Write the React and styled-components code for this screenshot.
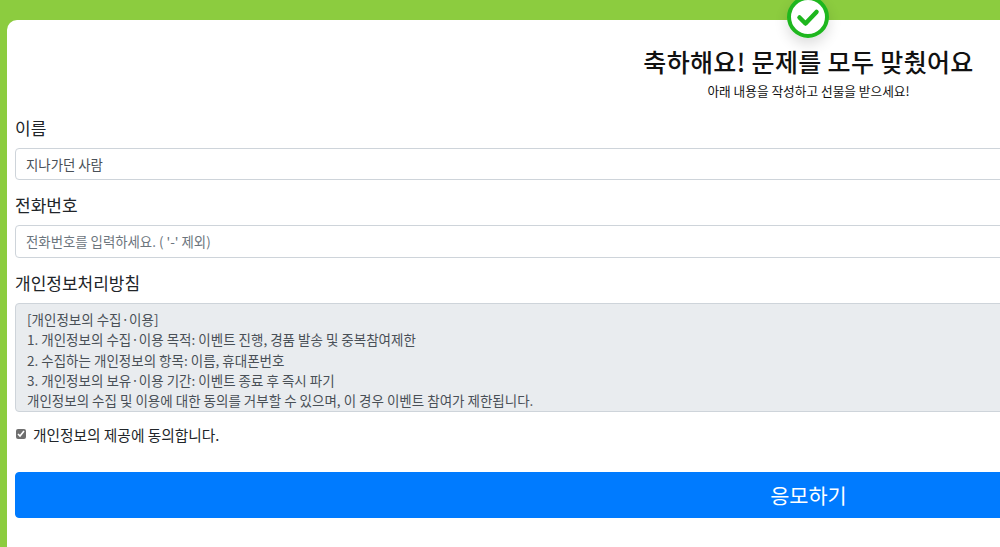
import React from 'react'
import styled, { createGlobalStyle } from 'styled-components'

const GlobalStyle = createGlobalStyle`
  html, body {
    margin: 0;
    padding: 0;
    height: 547px;
    overflow: hidden;
    background: #8ccc3f;
  }
  body, input, textarea, button {
    font-family: "Noto Sans CJK KR", "Noto Sans", sans-serif;
  }
`

const Page = styled.div`
  width: 1602px;
  height: 547px;
  padding: 20px 0 0 7px;
  box-sizing: border-box;
  background: #8ccc3f;
`

const Card = styled.div`
  position: relative;
  height: 527px;
  padding: 0 0 0 8px;
  box-sizing: border-box;
  background: #fff;
  border-radius: 10px 0 0 0;
`

const Badge = styled.div`
  position: absolute;
  top: -24px;
  left: 780px;
  width: 42px;
  height: 42px;
  border-radius: 50%;
  box-shadow: 0 6px 14px rgba(0, 0, 0, 0.14);
`

const Header = styled.header`
  display: flex;
  flex-direction: column;
  align-items: center;
  height: 95px;
  padding-top: 24px;
  box-sizing: border-box;
  color: #111;
`

const Title = styled.h1`
  margin: 0;
  font-size: 25px;
  line-height: 34px;
  font-weight: 500;
  letter-spacing: 0.35px;
`

const Subtitle = styled.p`
  margin: 3px 0 0;
  font-size: 12.7px;
  line-height: 20px;
  font-weight: 400;
`

const Form = styled.form`
  display: flex;
  flex-direction: column;
`

const Field = styled.div`
  display: flex;
  flex-direction: column;
  margin-bottom: ${p => p.$gap}px;
`

const Label = styled.label`
  font-size: 17px;
  line-height: 24px;
  margin: 1px 0 8px;
  color: #212529;
`

const TextInput = styled.input`
  height: ${p => p.$h}px;
  padding: 0 11px 1px 10px;
  box-sizing: border-box;
  font-size: 13.4px;
  color: #495057;
  background: #fff;
  border: 1px solid #ced4da;
  border-radius: 4px;
  outline: none;
  &::placeholder {
    color: #6c757d;
    opacity: 1;
  }
`

const PolicyBox = styled.div`
  height: 109px;
  padding: 5px 11px 0;
  box-sizing: border-box;
  font-size: 13.5px;
  line-height: 20.3px;
  color: #495057;
  background: #e9ecef;
  border: 1px solid #ced4da;
  border-radius: 4px;
`

const Agree = styled.label`
  display: flex;
  align-items: center;
  gap: 7px;
  height: 24px;
  margin-top: 10px;
  font-size: 14.7px;
  color: #212529;
`

const Check = styled.input`
  width: 10px;
  height: 10px;
  margin: 0 0 0 1px;
  accent-color: #6f6f6f;
`

const Submit = styled.button`
  height: 46px;
  margin-top: 26px;
  font-size: 20.8px;
  color: #fff;
  background: #007bff;
  border: 1px solid #007bff;
  border-radius: 4px;
`

const policy = [
  '[개인정보의 수집·이용]',
  '1. 개인정보의 수집·이용 목적: 이벤트 진행, 경품 발송 및 중복참여제한',
  '2. 수집하는 개인정보의 항목: 이름, 휴대폰번호',
  '3. 개인정보의 보유·이용 기간:  이벤트 종료 후 즉시 파기',
  '개인정보의 수집 및 이용에 대한 동의를 거부할 수 있으며, 이 경우 이벤트 참여가 제한됩니다.'
]

const CheckBadge = () => (
  <Badge>
    <svg width="42" height="42" viewBox="0 0 42 42">
      <circle cx="21" cy="21" r="19" fill="#fff" stroke="#1eb71e" strokeWidth="4" />
      <path d="M12.500 21.500l6 6 11-11.500" fill="none" stroke="#1eb71e" strokeWidth="4.500" strokeLinecap="round" strokeLinejoin="round" />
    </svg>
  </Badge>
)

export default function App() {
  return (
    <Page>
      <GlobalStyle />
      <Card>
        <CheckBadge />
        <Header>
          <Title>축하해요! 문제를 모두 맞췄어요</Title>
          <Subtitle>아래 내용을 작성하고 선물을 받으세요!</Subtitle>
        </Header>
        <Form>
          <Field $gap={12}>
            <Label>이름</Label>
            <TextInput $h={32} defaultValue="지나가던 사람" />
          </Field>
          <Field $gap={12}>
            <Label>전화번호</Label>
            <TextInput $h={33} placeholder="전화번호를 입력하세요. ( '-' 제외)" />
          </Field>
          <Field $gap={0}>
            <Label>개인정보처리방침</Label>
            <PolicyBox>
              {policy.map(line => (
                <div key={line}>{line}</div>
              ))}
            </PolicyBox>
          </Field>
          <Agree>
            <Check type="checkbox" defaultChecked />
            개인정보의 제공에 동의합니다.
          </Agree>
          <Submit type="button">응모하기</Submit>
        </Form>
      </Card>
    </Page>
  )
}
